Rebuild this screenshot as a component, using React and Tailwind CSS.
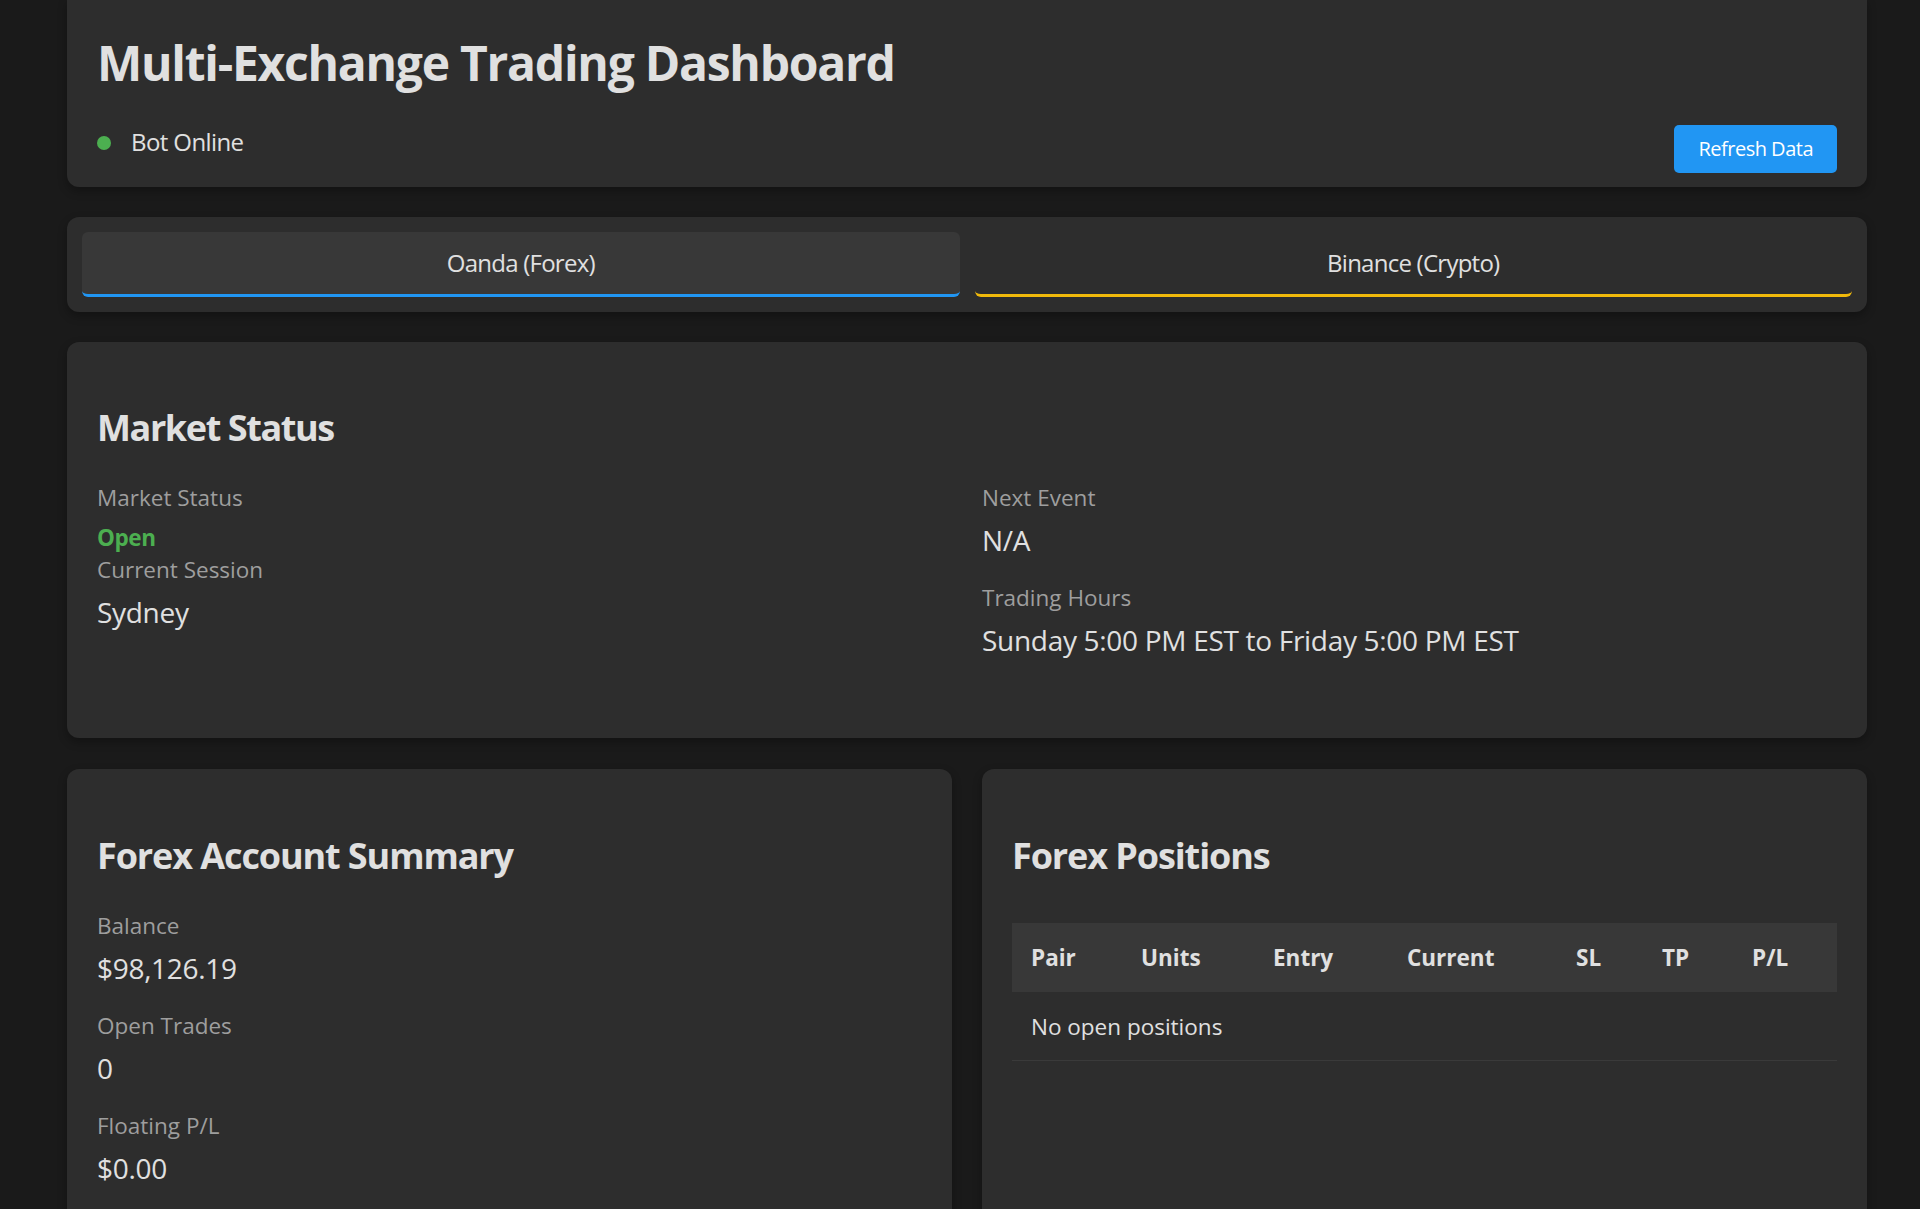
export default function App() {
  const cols = [
    ["Pair", "w-[110px]"],
    ["Units", "w-[132px]"],
    ["Entry", "w-[134px]"],
    ["Current", "w-[169px]"],
    ["SL", "w-[86px]"],
    ["TP", "w-[90px]"],
    ["P/L", "w-[104px]"],
  ];
  const card = "rounded-[12px] bg-[#2d2d2d] shadow-[0_4px_10px_rgba(0,0,0,0.3)]";
  return (
    <div className="min-h-screen bg-[#1a1a1a] text-[#e0e0e0] font-['Open_Sans','Noto_Sans',sans-serif] pb-[40px]">
      <div className="ml-[67px] w-[1800px]">
        {/* Header */}
        <div className="rounded-b-[12px] bg-[#2d2d2d] shadow-[0_4px_10px_rgba(0,0,0,0.3)] pl-[30px] pr-[30px] pt-[34px] pb-[14px] flex items-end justify-between">
          <div className="pb-[12px]">
            <h1 className="text-[48px] font-bold leading-[1.2] tracking-[-1.25px] text-[#e0e0e0]">Multi-Exchange Trading Dashboard</h1>
            <div className="mt-[33px] flex items-center h-[36px]">
              <span className="block w-[14px] h-[14px] rounded-full bg-[#4CAF50]" />
              <span className="ml-[20px] text-[24px] leading-[36px] tracking-[-0.6px] text-[#e0e0e0] relative top-[-1px]">Bot Online</span>
            </div>
          </div>
          <button className="h-[48px] px-[24px] rounded-[5px] bg-[#2196F3] text-white text-[20px] leading-[24px] tracking-[-0.5px]">Refresh Data</button>
        </div>

        {/* Tabs */}
        <div className={`mt-[30px] ${card} p-[15px] grid grid-cols-2 gap-[15px]`}>
          <button className="h-[65px] rounded-[6px] bg-[#383838] border-b-[3px] border-[#2196F3] text-[24px] tracking-[-0.75px] text-[#e0e0e0]">Oanda (Forex)</button>
          <button className="h-[65px] rounded-[6px] border-b-[3px] border-[#F0B90B] text-[24px] tracking-[-0.75px] text-[#e0e0e0]">Binance (Crypto)</button>
        </div>

        {/* Market Status */}
        <div className={`mt-[30px] ${card} px-[30px] pt-[64px] pb-[77px]`}>
          <h2 className="text-[36px] font-bold leading-[1.2] tracking-[-1.4px] mb-[32px] text-[#e0e0e0]">Market Status</h2>
          <div className="grid grid-cols-2 gap-[30px]">
            <div>
              <div className="text-[22.5px] leading-[34px] text-[#9e9e9e] mb-[9px]">Market Status</div>
              <div className="text-[22.5px] leading-[28px] font-bold tracking-[-0.4px] text-[#4CAF50] mb-[1px]">Open</div>
              <div className="text-[22.5px] leading-[34px] text-[#9e9e9e] mb-[4px]">Current Session</div>
              <div className="text-[28px] leading-[42px] tracking-[-0.3px] text-[#e0e0e0]">Sydney</div>
            </div>
            <div>
              <div className="mb-[20px]">
                <div className="text-[22.5px] leading-[34px] text-[#9e9e9e] mb-[4px]">Next Event</div>
                <div className="text-[28px] leading-[42px] tracking-[-0.3px] text-[#e0e0e0]">N/A</div>
              </div>
              <div>
                <div className="text-[22.5px] leading-[34px] text-[#9e9e9e] mb-[4px]">Trading Hours</div>
                <div className="text-[28px] leading-[42px] tracking-[-0.3px] text-[#e0e0e0]">Sunday 5:00 PM EST to Friday 5:00 PM EST</div>
              </div>
            </div>
          </div>
        </div>

        {/* Bottom row */}
        <div className="mt-[31px] grid grid-cols-2 gap-[30px]">
          <div className={`${card} px-[30px] pt-[65px] pb-[60px]`}>
            <h2 className="text-[36px] font-bold leading-[1.2] tracking-[-1.1px] mb-[32px] text-[#e0e0e0]">Forex Account Summary</h2>
            <div className="mb-[20px]">
              <div className="text-[22.5px] leading-[34px] text-[#9e9e9e] mb-[4px]">Balance</div>
              <div className="text-[28px] leading-[42px] tracking-[-0.3px] text-[#e0e0e0]">$98,126.19</div>
            </div>
            <div className="mb-[20px]">
              <div className="text-[22.5px] leading-[34px] text-[#9e9e9e] mb-[4px]">Open Trades</div>
              <div className="text-[28px] leading-[42px] tracking-[-0.3px] text-[#e0e0e0]">0</div>
            </div>
            <div className="mb-[20px]">
              <div className="text-[22.5px] leading-[34px] text-[#9e9e9e] mb-[4px]">Floating P/L</div>
              <div className="text-[28px] leading-[42px] tracking-[-0.3px] text-[#e0e0e0]">$0.00</div>
            </div>
          </div>
          <div className={`${card} px-[30px] pt-[65px] pb-[60px]`}>
            <h2 className="text-[36px] font-bold leading-[1.2] tracking-[-1.1px] text-[#e0e0e0]">Forex Positions</h2>
            <table className="mt-[46px] w-full table-fixed border-collapse">
              <thead>
                <tr className="bg-[#383838]">
                  {cols.map(([t, w]) => (
                    <th key={t} className={`${w} px-[19px] py-[18px] text-left text-[22.5px] leading-[33px] font-bold text-[#e0e0e0]`}>{t}</th>
                  ))}
                </tr>
              </thead>
              <tbody>
                <tr>
                  <td colSpan={7} className="px-[19px] pt-[19px] pb-[17px] text-[22.5px] leading-[32px] text-[#e0e0e0] border-b border-[#3a3a3a]">No open positions</td>
                </tr>
              </tbody>
            </table>
          </div>
        </div>
      </div>
    </div>
  );
}
